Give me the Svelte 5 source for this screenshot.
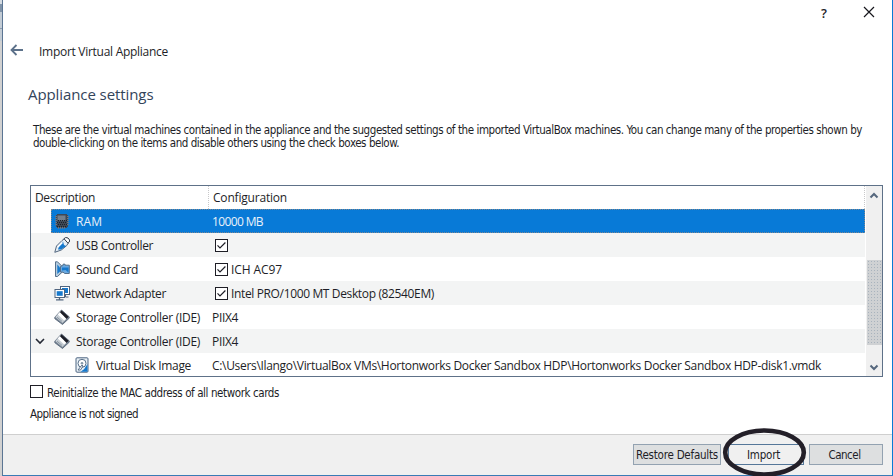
<script>
  const rows = [
    { icon: 'ram', name: 'RAM', nameW: 26, value: '10000 MB', valueW: 51, selected: true },
    { icon: 'usb', name: 'USB Controller', nameW: 77, check: true, value: '' },
    { icon: 'sound', name: 'Sound Card', nameW: 62, check: true, value: 'ICH AC97', valueW: 51 },
    { icon: 'net', name: 'Network Adapter', nameW: 90, check: true, value: 'Intel PRO/1000 MT Desktop (82540EM)', valueW: 203 },
    { icon: 'ide', name: 'Storage Controller (IDE)', nameW: 124, value: 'PIIX4', valueW: 26 },
    { icon: 'ide', name: 'Storage Controller (IDE)', nameW: 124, value: 'PIIX4', valueW: 26, open: true },
    {
      icon: 'disk', name: 'Virtual Disk Image', nameW: 95, child: true, valueW: 609,
      value: 'C:\\Users\\Ilango\\VirtualBox VMs\\Hortonworks Docker Sandbox HDP\\Hortonworks Docker Sandbox HDP-disk1.vmdk'
    }
  ];

  // Tracks a label so that it fills the given width.
  function fit(node, width) {
    if (!width) return;
    const natural = node.getBoundingClientRect().width;
    node.style.letterSpacing = (width - natural) / node.textContent.length + 'px';
  }
</script>

{#snippet tick()}
  <svg class="tick" width="13" height="13" viewBox="0 0 13 13">
    <rect x=".5" y=".5" width="12" height="12" fill="#fff" stroke="#1e1e26" />
    <path d="M2.500 6.300 5 8.900l5.400-5.400" fill="none" stroke="#1e1e26" stroke-width="1.200" />
  </svg>
{/snippet}

{#snippet glyph(kind)}
  <svg class="glyph" width="16" height="16" viewBox="0 0 16 16">
    {#if kind === 'ram'}
      <path d="M3 1h10v1h1v12h-1v1H3v-1H2V2h1z" fill="#3f4855" />
      <path d="M3.500 2.500h8v5h-8z" fill="#75808d" />
      <path d="M1 3.500h2M1 5.500h2M1 7.500h2M1 9.500h2M1 11.500h2M13 3.500h2M13 5.500h2M13 7.500h2M13 9.500h2M13 11.500h2M4.500 14v2M6.500 14v2M8.500 14v2M10.500 14v2" stroke="#6b7482" />
      <path d="M4 7.500h9M3 9.500h10M4 11.500h9M3 13.500h10" stroke="#1b212b" stroke-dasharray="1 1" />
    {:else if kind === 'usb'}
      <path d="M.8 15.300 2.500 9 8 3.500l2.500-1.800 4 3.800-1.700 3L7.300 13z" fill="#e6eff6" stroke="#53677f" />
      <path d="M4 12.500 5 9l4-4.500 1 3.500 2.200 1-5 3.500z" fill="#1679cd" />
      <path d="m4 10 4.500-4.500" stroke="#fff" stroke-width="1.200" />
      <path d="m10 1.700 1.700-1.200 2.300.5 1.600 2-.3 2-1.300 1.200z" fill="#fff" stroke="#303b49" />
    {:else if kind === 'sound'}
      <path d="M1.500.8h2l5 5v5l-5 4.700h-2z" fill="#b5cbdd" stroke="#55708c" />
      <path d="M3.300 3.500 6 6.500v4L3.300 13z" fill="#1679cd" />
      <path d="M6.500 5.500 9 4.500V3.200h2v1h4.300v8.300h-4.500L9 11.200 6.500 11z" fill="#6aa9e0" stroke="#55708c" />
      <path d="M8 6.500h6.500v5L11.500 9 8 9.500z" fill="#1679cd" />
    {:else if kind === 'net'}
      <rect x="6.500" y="1.500" width="9" height="8" fill="#fff" stroke="#50657f" />
      <rect x="8" y="3" width="6" height="5" fill="#1679cd" />
      <path d="M11.500 10v2h3" fill="none" stroke="#50657f" />
      <rect x="1" y="4.500" width="9.500" height="8" fill="#fff" stroke="#50657f" />
      <rect x="2.700" y="6.200" width="6" height="4.600" fill="#1679cd" />
      <path d="M5.500 13v1.500M2 14.800h7.500" stroke="#50657f" stroke-width="1.300" />
    {:else if kind === 'ide'}
      <path d="M.8 8.200 7.500 1 15.200 7.800v1.400L8.500 15.500.8 9.700z" fill="#758292" stroke="#536275" stroke-width=".8" />
      <path d="M1.200 8 7.500 1.300 14.800 7.700 8.400 14z" fill="#c7ced4" />
      <path d="m6 3.200 6.500 6.200-2.300 2.200-6.500-6z" fill="#fff" />
      <path d="m7.500 1.300 7.300 6.400-2.200 2.200L6 3.200z" fill="#1c1e27" />
      <path d="m3 8.200 5 4.200" stroke="#7d8b99" stroke-width=".8" />
    {:else}
      <rect x="2" y=".8" width="12" height="14.400" rx="1" fill="#e8f0f6" stroke="#4d6480" />
      <circle cx="8" cy="6.300" r="4" fill="#fff" stroke="#597089" />
      <circle cx="8" cy="6.300" r="1.300" fill="#8397a9" />
      <path d="M13.500 7v7.700H6.500l3.500-2.500z" fill="#1679cd" />
      <path d="m4 13 4-5 1 1-2.500 4z" fill="#fff" stroke="#4d6480" stroke-width=".9" />
    {/if}
  </svg>
{/snippet}

<div class="screen">
  <div class="edge"><i></i></div>
  <section class="dialog">
    <div class="titlebar">
      <b>?</b>
      <svg width="12" height="12" viewBox="0 0 12 12"><path d="m1 1 10 10M11 1 1 11" stroke="#17171d" stroke-width="1.200" /></svg>
    </div>
    <div class="wizard">
      <svg width="14" height="12" viewBox="0 0 14 12"><path d="M13 6H2M6.500 1 1.500 6l5 5" fill="none" stroke="#5c718a" stroke-width="1.800" /></svg>
      <span use:fit={129}>Import Virtual Appliance</span>
    </div>
    <h1><span use:fit={125.5}>Appliance settings</span></h1>
    <div class="intro ui">
      <div><span use:fit={829}>These are the virtual machines contained in the appliance and the suggested settings of the imported VirtualBox machines. You can change many of the properties shown by</span></div>
      <div><span use:fit={366}>double-clicking on the items and disable others using the check boxes below.</span></div>
    </div>

    <div class="table">
      <div class="grid">
        <div class="head">
          <div class="c1"><span use:fit={60}>Description</span></div>
          <div class="c2"><span use:fit={74}>Configuration</span></div>
        </div>
        {#each rows as row, i}
          <div class="row" class:alt={i % 2 === 1} class:selected={row.selected}>
            <div class="toggle">
              {#if row.open}
                <svg width="10" height="7" viewBox="0 0 10 7"><path d="m1 1 4 4 4-4" fill="none" stroke="#252a35" stroke-width="1.600" /></svg>
              {/if}
            </div>
            <div class="line">
              <div class="name" class:child={row.child}>{@render glyph(row.icon)}<span use:fit={row.nameW}>{row.name}</span></div>
              <div class="value" class:checked={row.check}>
                {#if row.check}{@render tick()}{/if}
                <span use:fit={row.valueW}>{row.value}</span>
              </div>
            </div>
          </div>
        {/each}
      </div>
      <div class="scroll">
        <svg width="10" height="7" viewBox="0 0 10 7"><path d="m1.500 5.500 3.500-3.500 3.500 3.500" fill="none" stroke="#55677d" stroke-width="2" /></svg>
        <div class="thumb"></div>
        <svg width="10" height="7" viewBox="0 0 10 7"><path d="m1.500 1.500 3.500 3.500 3.500-3.500" fill="none" stroke="#55677d" stroke-width="2" /></svg>
      </div>
    </div>

    <label class="mac ui"><i></i><span use:fit={232}>Reinitialize the MAC address of all network cards</span></label>
    <div class="signed ui"><span use:fit={108}>Appliance is not signed</span></div>

    <footer class="ui">
      <button class="restore"><span use:fit={82}>Restore Defaults</span></button>
      <button class="import"><span use:fit={33}>Import</span>
        <svg class="ring" width="86" height="50" viewBox="0 0 86 50"><ellipse cx="42.500" cy="25.500" rx="39.300" ry="22" fill="none" stroke="#231f28" stroke-width="4.600" /></svg>
      </button>
      <button class="cancel"><span use:fit={32}>Cancel</span></button>
    </footer>
  </section>
</div>

<style>
  :global(body) { margin: 0; overflow: hidden; background: #fff; }
  .screen { display: flex; width: 893px; height: 476px; overflow: hidden; box-sizing: border-box; color: #1d1e27; font: 12px/16px "Open Sans", "Noto Sans", sans-serif; }
  .screen :global(svg) { display: block; flex: none; }
  span { white-space: pre; display: inline-block; }
  .edge { width: 2px; background: #d1d1d1; }
  .edge i { display: block; height: 41px; background: linear-gradient(#d6dce2 0 4px, #8194a9 4px 12px, #c3ccd5 12px 28px, #8d9cae 28px 29px, #c3ccd5 29px); }
  .dialog { display: flex; flex-direction: column; width: 891px; height: 476px; box-sizing: border-box; border-left: 1px solid #5b7593; border-right: 1px solid #087bd5; border-bottom: 1px solid #397bb5; background: #fff; }
  .titlebar { height: 24px; flex: none; display: flex; justify-content: flex-end; align-items: center; gap: 36px; padding-right: 17px; box-sizing: border-box; }
  .titlebar b { font-size: 13px; font-weight: 600; width: 6px; margin-top: 1px; }
  .wizard { display: flex; align-items: center; height: 20px; flex: none; padding-left: 7px; gap: 15px; margin-top: 17px; }
  .wizard svg { margin-top: -3px; }
  .wizard span { margin-top: 1px; }
  h1 { margin: 23px 0 0 25px; font-size: 15px; line-height: 20px; font-weight: 400; color: #33445a; }
  .ui { font-family: "DejaVu Sans Condensed", "DejaVu Sans", sans-serif; font-size: 11.5px; font-stretch: condensed; }
  .intro { margin: 20px 0 0 30px; line-height: 13px; height: 26px; }
  .intro div { height: 13px; }
  .table { display: flex; flex: none; width: 853px; height: 192px; box-sizing: border-box; border: 1px solid #5e7188; margin: 35px 0 0 27px; }
  .grid { width: 834px; overflow: hidden; }
  .head { display: flex; height: 23px; line-height: 24px; box-sizing: border-box; }
  .c1 { width: 178px; padding-left: 4px; box-sizing: border-box; border-right: 1px dotted #c8c8ca; }
  .c2 { flex: 1; padding-left: 4px; border-right: 1px dotted #c8c8ca; }
  .row { display: flex; height: 24px; line-height: 24px; }
  .alt { background: #f3f4f4; }
  .toggle { width: 20px; display: flex; align-items: center; padding-left: 4px; box-sizing: border-box; }
  .line { flex: 1; display: flex; box-sizing: border-box; }
  .line span { padding-top: 2px; }
  .selected .line { background: #087ad7; color: #e8f1f9; outline: 1px dotted #7e8790; outline-offset: -1px; }
  .name { width: 161px; flex: none; box-sizing: border-box; display: flex; align-items: center; padding-left: 3px; gap: 6px; height: 24px; }
  .name.child { padding-left: 23px; }
  .value { display: flex; align-items: center; height: 24px; }
  .checked { padding-left: 3px; gap: 3px; }
  .scroll { width: 16px; margin-left: 1px; background: #f0f0f0; display: flex; flex-direction: column; align-items: center; padding: 6px 0 5px; box-sizing: border-box; }
  .thumb { width: 15px; height: 85px; margin: 61px 0 auto; background-color: #cfd1d3; background-image: radial-gradient(circle, #a9b3bd .7px, transparent .8px); background-size: 3px 3px; }
  .mac { display: flex; align-items: center; gap: 4px; margin: 8px 0 0 27px; height: 14px; line-height: 14px; }
  .mac i { width: 13px; height: 13px; box-sizing: border-box; border: 1px solid #1e1e26; margin-top: -1px; }
  .mac span { padding-top: 1px; }
  .signed { margin: 8px 0 0 27px; height: 14px; line-height: 14px; }
  footer { margin-top: auto; height: 41px; flex: none; display: flex; justify-content: flex-end; padding: 9px 9px 0 0; box-sizing: border-box; background: #f0f0f0; border-top: 1px solid #cfcfcf; }
  button { position: relative; height: 21px; padding: 0; box-sizing: border-box; border: 1px solid #93a2b1; background: #dddfe0; color: #1d1e27; font: inherit; display: flex; align-items: center; justify-content: center; }
  button span { padding-top: 1px; }
  .restore { width: 88px; margin-right: 7px; }
  .import { width: 76px; margin-right: 5px; background: #f0f0f0; border-color: #557799; }
  .import span { margin-right: 5px; }
  .cancel { width: 74px; }
  .cancel span { margin-right: 3px; }
  .ring { position: absolute; left: -7px; top: -18px; }
</style>
